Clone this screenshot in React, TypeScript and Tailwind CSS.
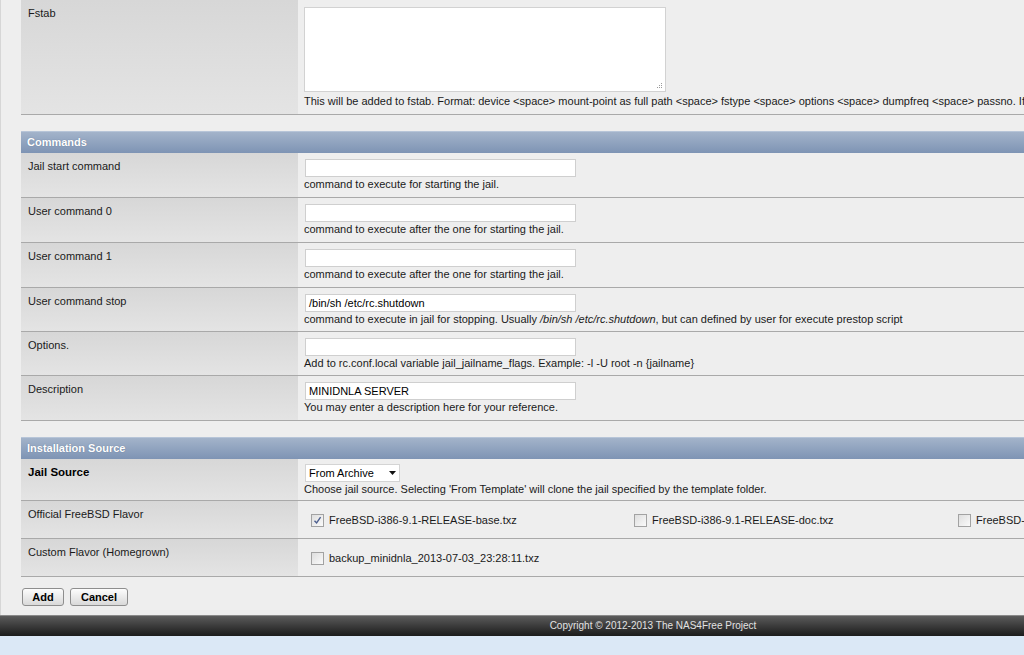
import React from 'react'

const font = "font-['Liberation_Sans',Arial,sans-serif]"

function Row({
    label,
    bold,
    children,
    valueClass = 'pt-[6px] pb-[6px]',
}: {
    label: string
    bold?: boolean
    children: React.ReactNode
    valueClass?: string
}) {
    return (
        <div className="flex border-b border-[#a9a9a9]">
            <div className="w-[277px] shrink-0 bg-gradient-to-b from-[#d7d7d7] to-[#e4e4e4] pl-[7px] pt-[6px]">
                <span className={bold ? 'text-[11.5px] font-bold text-black' : 'text-[#1a1a1a]'}>{label}</span>
            </div>
            <div className={`flex-1 bg-[#eeeeee] pl-[6px] ${valueClass}`}>{children}</div>
        </div>
    )
}

function SectionHeader({ title }: { title: string }) {
    return (
        <div className="mt-[16px] h-[22px] border-t border-[#b7c5d8] bg-gradient-to-b from-[#a3b3ca] to-[#7e94b4] pl-[6px] text-[11px] leading-[21px] font-bold text-white [text-shadow:0_0_1px_rgba(60,80,110,0.6)]">
            {title}
        </div>
    )
}

function TextInput({ value = '' }: { value?: string }) {
    return (
        <div className="ml-px h-[18px] w-[271px] border border-[#cfcfcf] bg-white pl-[3px] text-[11px] leading-[16px] text-black">
            {value}
        </div>
    )
}

function Checkbox({ checked, label }: { checked?: boolean; label: string }) {
    return (
        <div className="flex items-center gap-[5px] pl-[7px]">
            <span className="flex h-[13px] w-[13px] items-center justify-center border border-[#a2a2a2] bg-gradient-to-br from-[#dedede] to-[#fafafa]">
                {checked && (
                    <svg width="9" height="9" viewBox="0 0 9 9">
                        <path d="M1.5 4.8 L3.6 7 L7.6 1.2" fill="none" stroke="#4d5f8f" strokeWidth="1.4" />
                    </svg>
                )}
            </span>
            <span className="whitespace-nowrap">{label}</span>
        </div>
    )
}

export default function App() {
    return (
        <div className={`h-[655px] w-[1024px] overflow-hidden bg-[#dbe8f6] ${font} text-[11px] leading-[14px] text-[#1a1a1a]`}>
            <div className="w-[1306px]">
                <div className="border-l border-[#d6d6d6] bg-[#eeeeee] pb-[9px] pl-[20px]">
                    {/* Fstab */}
                    <Row label="Fstab" valueClass="pt-[7px] pb-[6px]">
                        <div className="relative h-[85px] w-[362px]">
                            <textarea
                                className="block h-full w-full resize-none border border-[#d2d2d2] bg-white outline-none"
                                defaultValue=""
                            />
                            {/* resize grip */}
                            <svg className="absolute right-[3px] bottom-[3px]" width="7" height="7" viewBox="0 0 7 7">
                                <g fill="#9a9a9a">
                                    <rect x="5" y="1" width="1" height="1" />
                                    <rect x="3" y="3" width="1" height="1" />
                                    <rect x="5" y="3" width="1" height="1" />
                                    <rect x="1" y="5" width="1" height="1" />
                                    <rect x="3" y="5" width="1" height="1" />
                                    <rect x="5" y="5" width="1" height="1" />
                                </g>
                            </svg>
                        </div>
                        <div className="mt-[2px] whitespace-nowrap">
                            This will be added to fstab. Format: device &lt;space&gt; mount-point as full path &lt;space&gt; fstype &lt;space&gt; options &lt;space&gt; dumpfreq &lt;space&gt; passno. If the mount-point does not exist it will be created.
                        </div>
                    </Row>

                    <SectionHeader title="Commands" />
                    <Row label="Jail start command">
                        <TextInput />
                        <div>command to execute for starting the jail.</div>
                    </Row>
                    <Row label="User command 0">
                        <TextInput />
                        <div>command to execute after the one for starting the jail.</div>
                    </Row>
                    <Row label="User command 1">
                        <TextInput />
                        <div>command to execute after the one for starting the jail.</div>
                    </Row>
                    <Row label="User command stop" valueClass="pt-[6px] pb-[5px]">
                        <TextInput value="/bin/sh /etc/rc.shutdown" />
                        <div>
                            command to execute in jail for stopping. Usually <i>/bin/sh /etc/rc.shutdown</i>, but can defined by user for execute prestop script
                        </div>
                    </Row>
                    <Row label="Options." valueClass="pt-[6px] pb-[5px]">
                        <TextInput />
                        <div>Add to rc.conf.local variable jail_jailname_flags. Example: -l -U root -n {'{jailname}'}</div>
                    </Row>
                    <Row label="Description">
                        <TextInput value="MINIDNLA SERVER" />
                        <div>You may enter a description here for your reference.</div>
                    </Row>

                    <SectionHeader title="Installation Source" />
                    <Row label="Jail Source" bold valueClass="pt-[5px] pb-[4px]">
                        <div className="ml-px flex h-[18px] w-[95px] items-center justify-between border border-[#d4d4d4] bg-white pl-[3px] pr-[3px] text-black">
                            <span>From Archive</span>
                            <svg width="7" height="4" viewBox="0 0 7 4">
                                <path d="M0 0 H7 L3.5 4 Z" fill="#111" />
                            </svg>
                        </div>
                        <div>Choose jail source. Selecting 'From Template' will clone the jail specified by the template folder.</div>
                    </Row>
                    <Row label="Official FreeBSD Flavor" valueClass="pt-[12px] pb-[11px]">
                        <div className="grid grid-cols-[323px_324px_324px]">
                            <Checkbox checked label="FreeBSD-i386-9.1-RELEASE-base.txz" />
                            <Checkbox label="FreeBSD-i386-9.1-RELEASE-doc.txz" />
                            <Checkbox label="FreeBSD-i386-9.1-RELEASE-lib32.txz" />
                        </div>
                    </Row>
                    <Row label="Custom Flavor (Homegrown)" valueClass="pt-[12px] pb-[11px]">
                        <Checkbox label="backup_minidnla_2013-07-03_23:28:11.txz" />
                    </Row>

                    <div className="mt-[11px] flex gap-[6px] pl-px">
                        <button className="h-[18px] w-[42px] rounded-[3px] border border-[#8e8e8e] bg-gradient-to-b from-[#fdfdfd] to-[#d9d9d9] text-[11px] leading-[16px] font-bold text-black">
                            Add
                        </button>
                        <button className="h-[18px] w-[58px] rounded-[3px] border border-[#8e8e8e] bg-gradient-to-b from-[#fdfdfd] to-[#d9d9d9] text-[11px] leading-[16px] font-bold text-black">
                            Cancel
                        </button>
                    </div>
                </div>

                <div className="h-[21px] border-t border-[#8a8a8a] bg-gradient-to-b from-[#5c5c5c] to-[#1c1c1c] text-center text-[10px] leading-[20px] text-[#e2e2e2]">
                    Copyright © 2012-2013 The NAS4Free Project
                </div>
            </div>
        </div>
    )
}
